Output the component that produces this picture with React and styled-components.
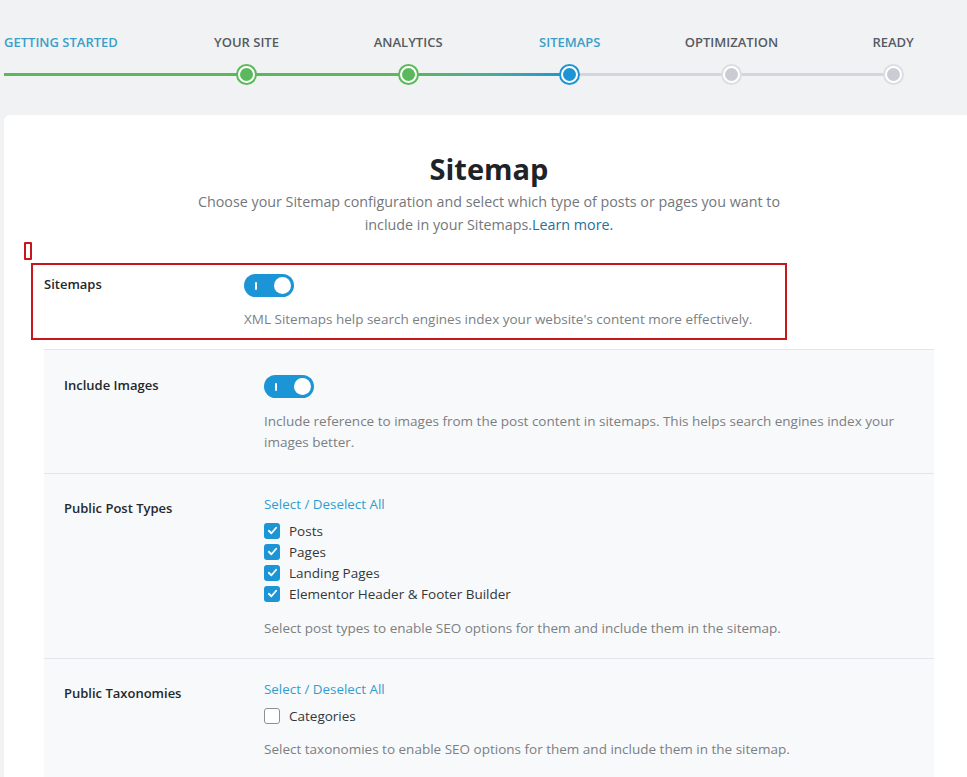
import React from "react";
import styled, { createGlobalStyle } from "styled-components";

const GlobalStyle = createGlobalStyle`
  html, body {
    margin: 0;
    padding: 0;
    background: #f1f2f4;
    overflow: hidden;
  }
  body {
    font-family: "Open Sans", "Noto Sans", sans-serif;
    color: #23282d;
  }
`;

const GREEN = "#5cb85c";
const BLUE = "#1b95d6";
const GRAY_LINE = "#d3d6db";

const steps = [
  { label: "Getting Started", state: "first" },
  { label: "Your Site", state: "done" },
  { label: "Analytics", state: "done" },
  { label: "Sitemaps", state: "active" },
  { label: "Optimization", state: "todo" },
  { label: "Ready", state: "last" },
];

// colours of the track halves (left from/to, right from/to) per step
const tracks = [
  [GREEN, GREEN, GREEN, GREEN],
  [GREEN, GREEN, GREEN, GREEN],
  [GREEN, GREEN, GREEN, "#4aab9a"],
  ["#4aab9a", BLUE, GRAY_LINE, GRAY_LINE],
  [GRAY_LINE, GRAY_LINE, GRAY_LINE, GRAY_LINE],
  [GRAY_LINE, GRAY_LINE, "transparent", "transparent"],
];

const Page = styled.div`
  width: 970px;
  margin-left: 4px;
`;

const Stepper = styled.div`
  display: grid;
  grid-template-columns: repeat(6, 161.67px);
  padding-top: 34px;
  height: 115px;
  box-sizing: border-box;
`;

const Step = styled.div`
  display: flex;
  flex-direction: column;
  align-items: ${(p) => (p.$first ? "flex-start" : "center")};
`;

const StepLabel = styled.div`
  font-size: 13px;
  font-weight: 600;
  text-transform: uppercase;
  line-height: 17px;
  color: ${(p) => (p.$blue ? "#3a9fc8" : "#555b61")};
  white-space: nowrap;
`;

const Track = styled.div`
  align-self: stretch;
  height: 22px;
  margin-top: 12px;
  display: flex;
  justify-content: center;
  align-items: center;
  background:
    linear-gradient(90deg, ${(p) => p.$c[0]}, ${(p) => p.$c[1]}) left center / 50% 3px no-repeat,
    linear-gradient(90deg, ${(p) => p.$c[2]}, ${(p) => p.$c[3]}) right center / 50% 3px no-repeat;
`;

const Dot = styled.span`
  width: 13px;
  height: 13px;
  border-radius: 50%;
  background: ${(p) => p.$fill};
  border: 2px solid #fff;
  box-shadow: 0 0 0 2px ${(p) => p.$ring};
`;

const Card = styled.div`
  background: #fff;
  border-top-left-radius: 6px;
  padding: 36px 40px 0 40px;
  min-height: 700px;
`;

const Title = styled.h1`
  margin: 0;
  text-align: center;
  font-size: 29px;
  font-weight: 700;
  color: #1d2327;
  line-height: 36px;
`;

const Intro = styled.p`
  margin: 3px auto 0;
  width: 600px;
  text-align: center;
  font-size: 14.3px;
  line-height: 23px;
  color: #73777c;
`;

const Link = styled.a`
  color: ${(p) => (p.$light ? "#2f9fd0" : "#23709e")};
  text-decoration: none;
  font-size: ${(p) => (p.$light ? "13.4px" : "inherit")};
`;

const Marker = styled.div`
  position: relative;
  height: 27px;
`;

const SmallMark = styled.span`
  position: absolute;
  left: -20px;
  top: 6px;
  width: 4px;
  height: 14px;
  border: 2px solid #c8161d;
  border-radius: 1px;
`;

const Highlight = styled.div`
  position: relative;
  height: 86px;
`;

const HighlightFrame = styled.span`
  position: absolute;
  left: -13px;
  top: 0;
  width: 752px;
  height: 73px;
  border: 2px solid #c8161d;
  pointer-events: none;
`;

const Row = styled.div`
  display: grid;
  grid-template-columns: 200px 1fr;
  padding: ${(p) => p.$pad || "12px 0 0"};
`;

const Label = styled.div`
  font-size: 13px;
  font-weight: 600;
  color: #23282d;
  padding-top: ${(p) => p.$top || "0"};
  line-height: 18px;
`;

const Control = styled.div`
  display: flex;
  flex-direction: column;
  align-items: flex-start;
`;

const Toggle = styled.span`
  width: 50px;
  height: 23px;
  border-radius: 12px;
  background: ${BLUE};
  display: flex;
  align-items: center;
  justify-content: space-between;
  padding: 0 3px 0 11px;
  box-sizing: border-box;
  margin-top: ${(p) => p.$top || "0"};
  &::before {
    content: "";
    width: 2px;
    height: 8px;
    background: #fff;
    border-radius: 1px;
  }
  &::after {
    content: "";
    width: 17px;
    height: 17px;
    border-radius: 50%;
    background: #fff;
  }
`;

const Help = styled.p`
  margin: ${(p) => p.$m || "11px 0 0"};
  font-size: 13.5px;
  line-height: 21px;
  color: #7b7f84;
`;

const Section = styled.div`
  background: #f8f9fa;
  border-top: 1px solid #e3e5e8;
`;

const SectionRow = styled(Row)`
  padding: ${(p) => p.$pad || "24px 20px 0"};
  border-bottom: ${(p) => (p.$last ? "none" : "1px solid #e3e5e8")};
`;

const Checks = styled.div`
  display: flex;
  flex-direction: column;
  margin-top: 7px;
`;

const CheckRow = styled.label`
  display: flex;
  align-items: center;
  gap: 9px;
  height: 21px;
  font-size: 13.5px;
  color: #32373c;
`;

const Box = styled.span`
  width: 16px;
  height: 16px;
  border-radius: 3px;
  box-sizing: border-box;
  display: flex;
  align-items: center;
  justify-content: center;
  background: ${(p) => (p.$on ? BLUE : "#fff")};
  border: ${(p) => (p.$on ? "none" : "1px solid #8c8f94")};
`;

const Check = ({ on, children }) => (
  <CheckRow>
    <Box $on={on}>
      {on && (
        <svg width="11" height="11" viewBox="0 0 12 12">
          <path d="M2 6.3 L4.8 9 L10 3" fill="none" stroke="#fff" strokeWidth="2" strokeLinecap="round" strokeLinejoin="round" />
        </svg>
      )}
    </Box>
    {children}
  </CheckRow>
);

const dotStyle = {
  done: { fill: GREEN, ring: GREEN },
  active: { fill: BLUE, ring: BLUE },
  todo: { fill: "#c9ccd2", ring: "#dcdee1" },
  last: { fill: "#c9ccd2", ring: "#dcdee1" },
};

export default function App() {
  return (
    <Page>
      <GlobalStyle />
      <Stepper>
        {steps.map((s, i) => (
          <Step key={s.label} $first={i === 0}>
            <StepLabel $blue={s.state === "first" || s.state === "active"}>{s.label}</StepLabel>
            <Track $c={tracks[i]}>
              {i > 0 && <Dot $fill={dotStyle[s.state].fill} $ring={dotStyle[s.state].ring} />}
            </Track>
          </Step>
        ))}
      </Stepper>

      <Card>
        <Title>Sitemap</Title>
        <Intro>
          Choose your Sitemap configuration and select which type of posts or pages you want to include in your
          Sitemaps.<Link href="#">Learn more.</Link>
        </Intro>
        <Marker>
          <SmallMark />
        </Marker>

        <Highlight>
          <HighlightFrame />
          <Row $pad="11px 0 0">
            <Label $top="1px">Sitemaps</Label>
            <Control>
              <Toggle />
              <Help $m="12px 0 0">XML Sitemaps help search engines index your website's content more effectively.</Help>
            </Control>
          </Row>
        </Highlight>

        <Section>
          <SectionRow $pad="25px 20px 20px">
            <Label $top="1px">Include Images</Label>
            <Control>
              <Toggle />
              <Help $m="13px 0 0">
                Include reference to images from the post content in sitemaps. This helps search engines index your
                images better.
              </Help>
            </Control>
          </SectionRow>

          <SectionRow $pad="21px 20px 19px">
            <Label $top="4px">Public Post Types</Label>
            <Control>
              <Link href="#" $light>Select / Deselect All</Link>
              <Checks>
                <Check on>Posts</Check>
                <Check on>Pages</Check>
                <Check on>Landing Pages</Check>
                <Check on>Elementor Header &amp; Footer Builder</Check>
              </Checks>
              <Help $m="14px 0 0">Select post types to enable SEO options for them and include them in the sitemap.</Help>
            </Control>
          </SectionRow>

          <SectionRow $pad="21px 20px 30px" $last>
            <Label $top="4px">Public Taxonomies</Label>
            <Control>
              <Link href="#" $light>Select / Deselect All</Link>
              <Checks>
                <Check>Categories</Check>
              </Checks>
              <Help $m="13px 0 0">Select taxonomies to enable SEO options for them and include them in the sitemap.</Help>
            </Control>
          </SectionRow>
        </Section>
      </Card>
    </Page>
  );
}
